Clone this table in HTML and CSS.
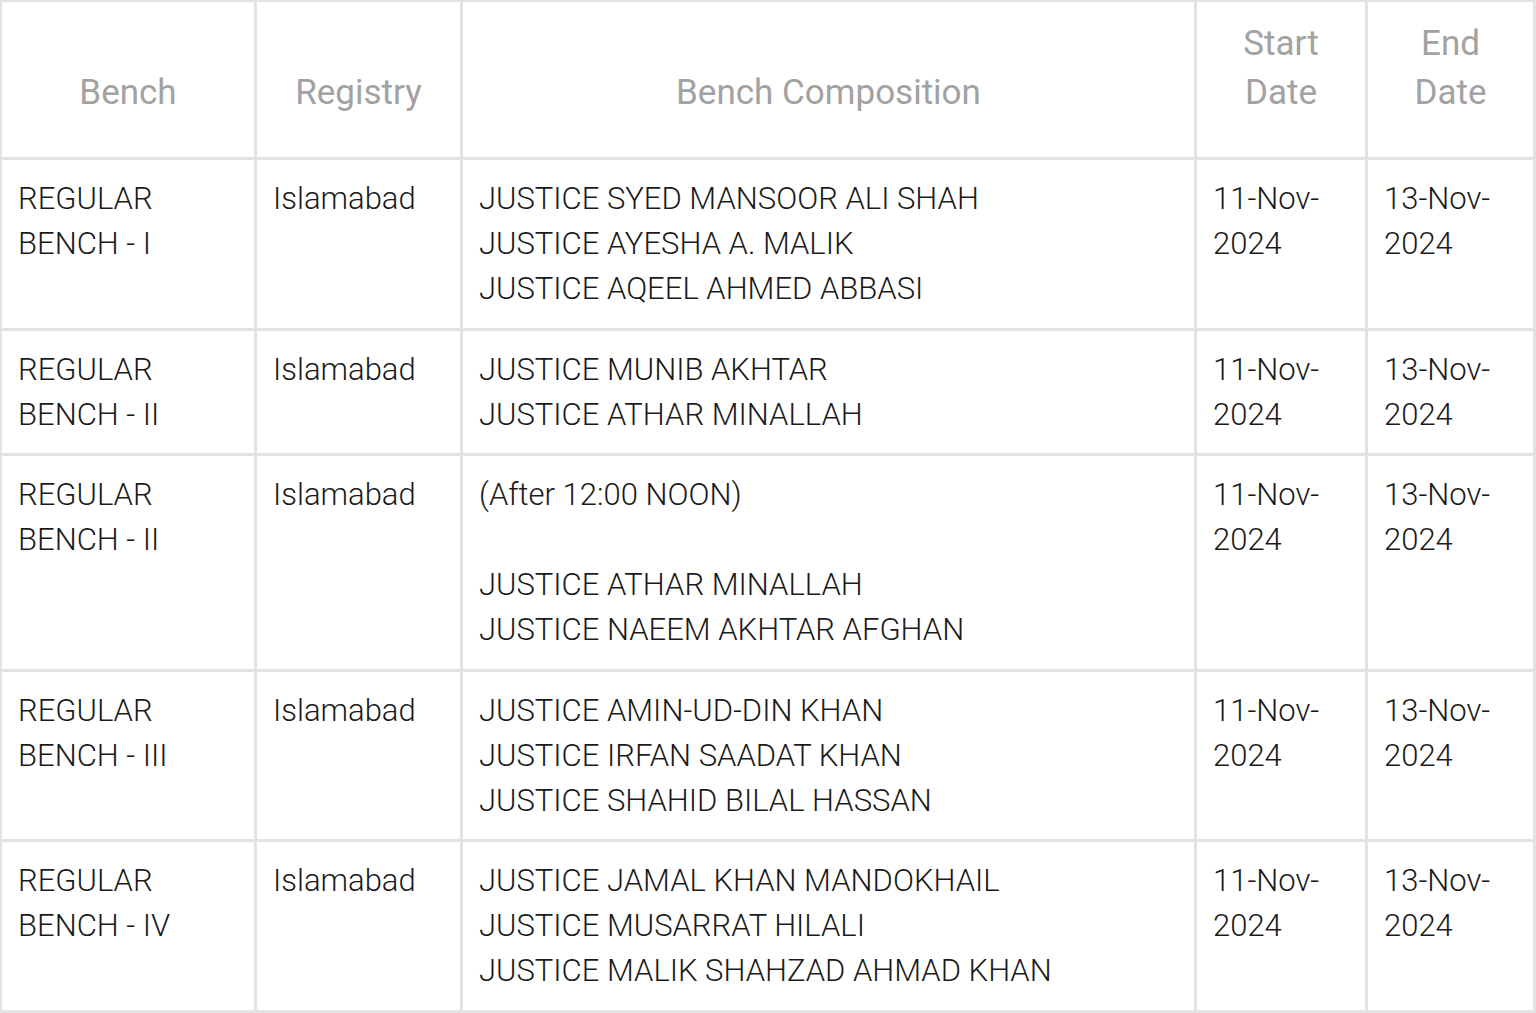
FILE: index.html
```html
<!DOCTYPE html>
<html lang="en">
<head>
<meta charset="utf-8">
<title>Bench Composition</title>
<link rel="stylesheet" href="styles.css">
</head>
<body>
<div class="table">
  <div class="th">Bench</div>
  <div class="th">Registry</div>
  <div class="th">Bench Composition</div>
  <div class="th">Start<br>Date</div>
  <div class="th">End<br>Date</div>

  <div class="td">REGULAR<br>BENCH - I</div>
  <div class="td">Islamabad</div>
  <div class="td">JUSTICE SYED MANSOOR ALI SHAH<br>JUSTICE AYESHA A. MALIK<br>JUSTICE AQEEL AHMED ABBASI</div>
  <div class="td">11-Nov-<br>2024</div>
  <div class="td">13-Nov-<br>2024</div>

  <div class="td">REGULAR<br>BENCH - II</div>
  <div class="td">Islamabad</div>
  <div class="td">JUSTICE MUNIB AKHTAR<br>JUSTICE ATHAR MINALLAH</div>
  <div class="td">11-Nov-<br>2024</div>
  <div class="td">13-Nov-<br>2024</div>

  <div class="td">REGULAR<br>BENCH - II</div>
  <div class="td">Islamabad</div>
  <div class="td">(After 12:00 NOON)<br><br>JUSTICE ATHAR MINALLAH<br>JUSTICE NAEEM AKHTAR AFGHAN</div>
  <div class="td">11-Nov-<br>2024</div>
  <div class="td">13-Nov-<br>2024</div>

  <div class="td">REGULAR<br>BENCH - III</div>
  <div class="td">Islamabad</div>
  <div class="td">JUSTICE AMIN-UD-DIN KHAN<br>JUSTICE IRFAN SAADAT KHAN<br>JUSTICE SHAHID BILAL HASSAN</div>
  <div class="td">11-Nov-<br>2024</div>
  <div class="td">13-Nov-<br>2024</div>

  <div class="td">REGULAR<br>BENCH - IV</div>
  <div class="td">Islamabad</div>
  <div class="td">JUSTICE JAMAL KHAN MANDOKHAIL<br>JUSTICE MUSARRAT HILALI<br>JUSTICE MALIK SHAHZAD AHMAD KHAN</div>
  <div class="td">11-Nov-<br>2024</div>
  <div class="td">13-Nov-<br>2024</div>
</div>
</body>
</html>
```
FILE: styles.css
```css
html, body {
  margin: 0;
  padding: 0;
  background: #ffffff;
}

body {
  font-family: Roboto, "Liberation Sans", sans-serif;
}

.table {
  display: grid;
  grid-template-columns: 252px 203px 731px 168px 165px;
  gap: 3px;
  padding: 2px 3px 3px 2px;
  background: #e3e3e3;
  width: max-content;
}

.th,
.td {
  background: #ffffff;
}

.th {
  display: flex;
  flex-direction: column;
  justify-content: flex-end;
  text-align: center;
  color: #a2a2a2;
  font-size: 35px;
  line-height: 49px;
  font-weight: 400;
  padding: 17px 12px 40px;
}

.td {
  font-family: "Roboto Light", Roboto, "Liberation Sans", sans-serif;
  color: #1a1a1a;
  font-size: 31px;
  line-height: 45px;
  font-weight: 300;
  padding: 16px 12px 16.5px 16px;
}
```
